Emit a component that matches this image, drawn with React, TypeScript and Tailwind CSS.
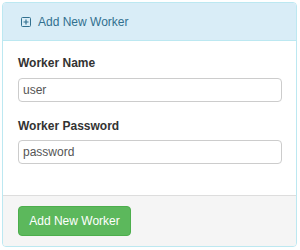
export default function App() {
  return (
    <div className="w-[300px] h-[250px] bg-white pt-[2px] pl-[2px]" style={{ fontFamily: '"Liberation Sans", Arial, sans-serif' }}>
      <div className="w-[295px] h-[245px] border border-[#bce8f1] rounded-[4px] overflow-hidden flex flex-col">
        <div className="h-[38px] shrink-0 bg-[#d9edf7] border-b border-[#bce8f1] flex items-center pl-[18px] text-[#31708f] text-[12px]">
          <svg width="10" height="10" viewBox="0 0 10 10" className="mr-[7px] mt-[1px]">
            <rect x="0.5" y="0.5" width="9" height="9" rx="1" fill="none" stroke="#31708f" strokeWidth="1" />
            <path d="M5 2.5v5M2.5 5h5" stroke="#31708f" strokeWidth="1.2" />
          </svg>
          <span>Add New Worker</span>
        </div>
        <div className="h-[154px] shrink-0 bg-white px-[15px] pt-[14px]">
          <div className="text-[12px] leading-[17px] font-bold text-[#333] mb-[6px]">Worker Name</div>
          <div className="h-[24px] w-[264px] border border-[#ccc] rounded-[4px] flex items-center px-[4px] text-[12px] text-[#555]">user</div>
          <div className="text-[12px] leading-[17px] font-bold text-[#333] mt-[16px] mb-[5px]">Worker Password</div>
          <div className="h-[24px] w-[264px] border border-[#ccc] rounded-[4px] flex items-center px-[4px] text-[12px] text-[#555]">password</div>
        </div>
        <div className="flex-1 bg-[#f5f5f5] border-t border-[#ddd] px-[15px] pt-[10px]">
          <button className="h-[30px] w-[113px] bg-[#5cb85c] border border-[#4cae4c] rounded-[4px] text-white text-[12px] flex items-center justify-center">
            Add New Worker
          </button>
        </div>
      </div>
    </div>
  );
}
